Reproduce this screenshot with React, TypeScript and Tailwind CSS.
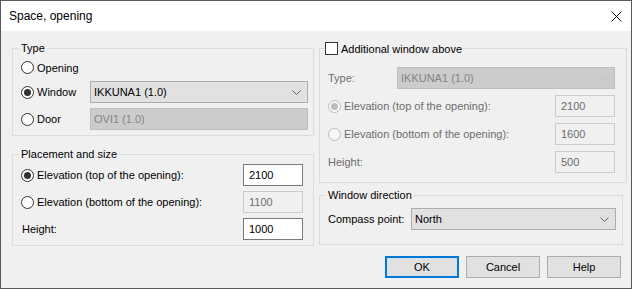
import React from 'react';

const Chevron = ({ disabled }: { disabled?: boolean }) => (
  <svg width="9" height="5" viewBox="0 0 9 5" className="shrink-0">
    <polyline points="0.5,0.5 4.5,4.5 8.5,0.5" fill="none" stroke={disabled ? '#bfbfbf' : '#606060'} strokeWidth="1" />
  </svg>
);

const Radio = ({ checked, disabled }: { checked?: boolean; disabled?: boolean }) => (
  <span
    className={`w-[13px] h-[13px] rounded-full border shrink-0 flex items-center justify-center ${
      disabled ? 'border-[#bcbcbc] bg-[#f7f7f7]' : 'border-[#333333] bg-white'
    }`}
  >
    {checked && <span className={`w-[7px] h-[7px] rounded-full ${disabled ? 'bg-[#bcbcbc]' : 'bg-[#333333]'}`} />}
  </span>
);

const Select = ({ value, disabled, width }: { value: string; disabled?: boolean; width: string }) => (
  <div
    className={`${width} h-[22px] border flex items-center justify-between pl-[3px] pr-[6px] ${
      disabled ? 'bg-[#cccccc] border-[#bfbfbf] text-[#838383]' : 'bg-[#e1e1e1] border-[#adadad] text-black'
    }`}
  >
    <span>{value}</span>
    <Chevron disabled={disabled} />
  </div>
);

const Field = ({ value, disabled }: { value: string; disabled?: boolean }) => (
  <div
    className={`w-[60px] h-[22px] border flex items-center pl-[5px] ${
      disabled ? 'bg-[#f0f0f0] border-[#cccccc] text-[#6d6d6d]' : 'bg-white border-[#7a7a7a] text-black'
    }`}
  >
    {value}
  </div>
);

const RadioRow = ({ label, checked, disabled }: { label: string; checked?: boolean; disabled?: boolean }) => (
  <div className="flex items-center">
    <Radio checked={checked} disabled={disabled} />
    <span className={`ml-[3px] ${disabled ? 'text-[#6d6d6d]' : ''}`}>{label}</span>
  </div>
);

const Button = ({ label, primary }: { label: string; primary?: boolean }) => (
  <div
    className={`w-[74px] h-[22px] bg-[#e1e1e1] flex items-center justify-center ${
      primary ? 'border-2 border-[#0078d7]' : 'border border-[#adadad]'
    }`}
  >
    {label}
  </div>
);

export default function App() {
  return (
    <div className="w-[632px] h-[289px] border border-[#5a5a5a] bg-[#f0f0f0] flex flex-col text-[11px] leading-[14px] text-black font-['Liberation_Sans',Arial,sans-serif]">
      <div className="h-[30px] bg-white flex items-center justify-between pl-[8px] pr-[9px] shrink-0">
        <span className="text-[12px]">Space, opening</span>
        <svg width="11" height="11" viewBox="0 0 11 11">
          <path d="M0.5 0.5 L10.5 10.5 M10.5 0.5 L0.5 10.5" stroke="#111" strokeWidth="1" />
        </svg>
      </div>

      <div className="flex-1 flex flex-col pt-[10px] pl-[11px] pr-[9px]">
        <div className="flex gap-[5px]">
          {/* left column */}
          <div className="w-[302px] flex flex-col">
            <fieldset className="border border-[#dcdcdc] pl-[8px] pr-[5px] pb-[5px]">
              <legend className="-ml-[2px] px-[2px]">Type</legend>
              <div className="mt-[2px] h-[21px] flex items-center">
                <RadioRow label="Opening" />
              </div>
              <div className="mt-[3px] flex items-center">
                <div className="w-[69px]">
                  <RadioRow label="Window" checked />
                </div>
                <Select value="IKKUNA1 (1.0)" width="w-[218px]" />
              </div>
              <div className="mt-[5px] flex items-center">
                <div className="w-[69px]">
                  <RadioRow label="Door" />
                </div>
                <Select value="OVI1 (1.0)" width="w-[218px]" disabled />
              </div>
            </fieldset>

            <fieldset className="mt-[11px] border border-[#dcdcdc] pl-[8px] pr-[10px] pb-[5px]">
              <legend className="-ml-[2px] px-[2px]">Placement and size</legend>
              <div className="mt-[3px] flex items-center justify-between">
                <RadioRow label="Elevation (top of the opening):" checked />
                <Field value="2100" />
              </div>
              <div className="mt-[5px] flex items-center justify-between">
                <RadioRow label="Elevation (bottom of the opening):" />
                <Field value="1100" disabled />
              </div>
              <div className="mt-[5px] flex items-center justify-between">
                <span className="ml-[1px]">Height:</span>
                <Field value="1000" />
              </div>
            </fieldset>
          </div>

          {/* right column */}
          <div className="w-[303px] flex flex-col">
            <fieldset className="border border-[#dcdcdc] pl-[8px] pr-[11px] pb-[9px]">
              <legend className="-ml-[4px] px-[1px] flex items-center h-[15px]">
                <span className="w-[13px] h-[13px] border border-[#333333] bg-white" />
                <span className="ml-[3px]">Additional window above</span>
              </legend>
              <div className="mt-[11px] flex items-center">
                <span className="w-[69px] text-[#6d6d6d]">Type:</span>
                <Select value="IKKUNA1 (1.0)" width="w-[218px]" disabled />
              </div>
              <div className="mt-[6px] flex items-center justify-between">
                <RadioRow label="Elevation (top of the opening):" checked disabled />
                <Field value="2100" disabled />
              </div>
              <div className="mt-[6px] flex items-center justify-between">
                <RadioRow label="Elevation (bottom of the opening):" disabled />
                <Field value="1600" disabled />
              </div>
              <div className="mt-[6px] flex items-center justify-between">
                <span className="text-[#6d6d6d]">Height:</span>
                <Field value="500" disabled />
              </div>
            </fieldset>

            <fieldset className="mt-[5px] border border-[#dcdcdc] pl-[8px] pr-[6px] pb-[14px]">
              <legend className="-ml-[2px] px-[2px]">Window direction</legend>
              <div className="mt-[6px] flex items-center">
                <span className="w-[83px]">Compass point:</span>
                <Select value="North" width="w-[205px]" />
              </div>
            </fieldset>
          </div>
        </div>

        <div className="mt-[10px] flex justify-end gap-[7px] pr-[1px]">
          <Button label="OK" primary />
          <Button label="Cancel" />
          <Button label="Help" />
        </div>
      </div>
    </div>
  );
}
